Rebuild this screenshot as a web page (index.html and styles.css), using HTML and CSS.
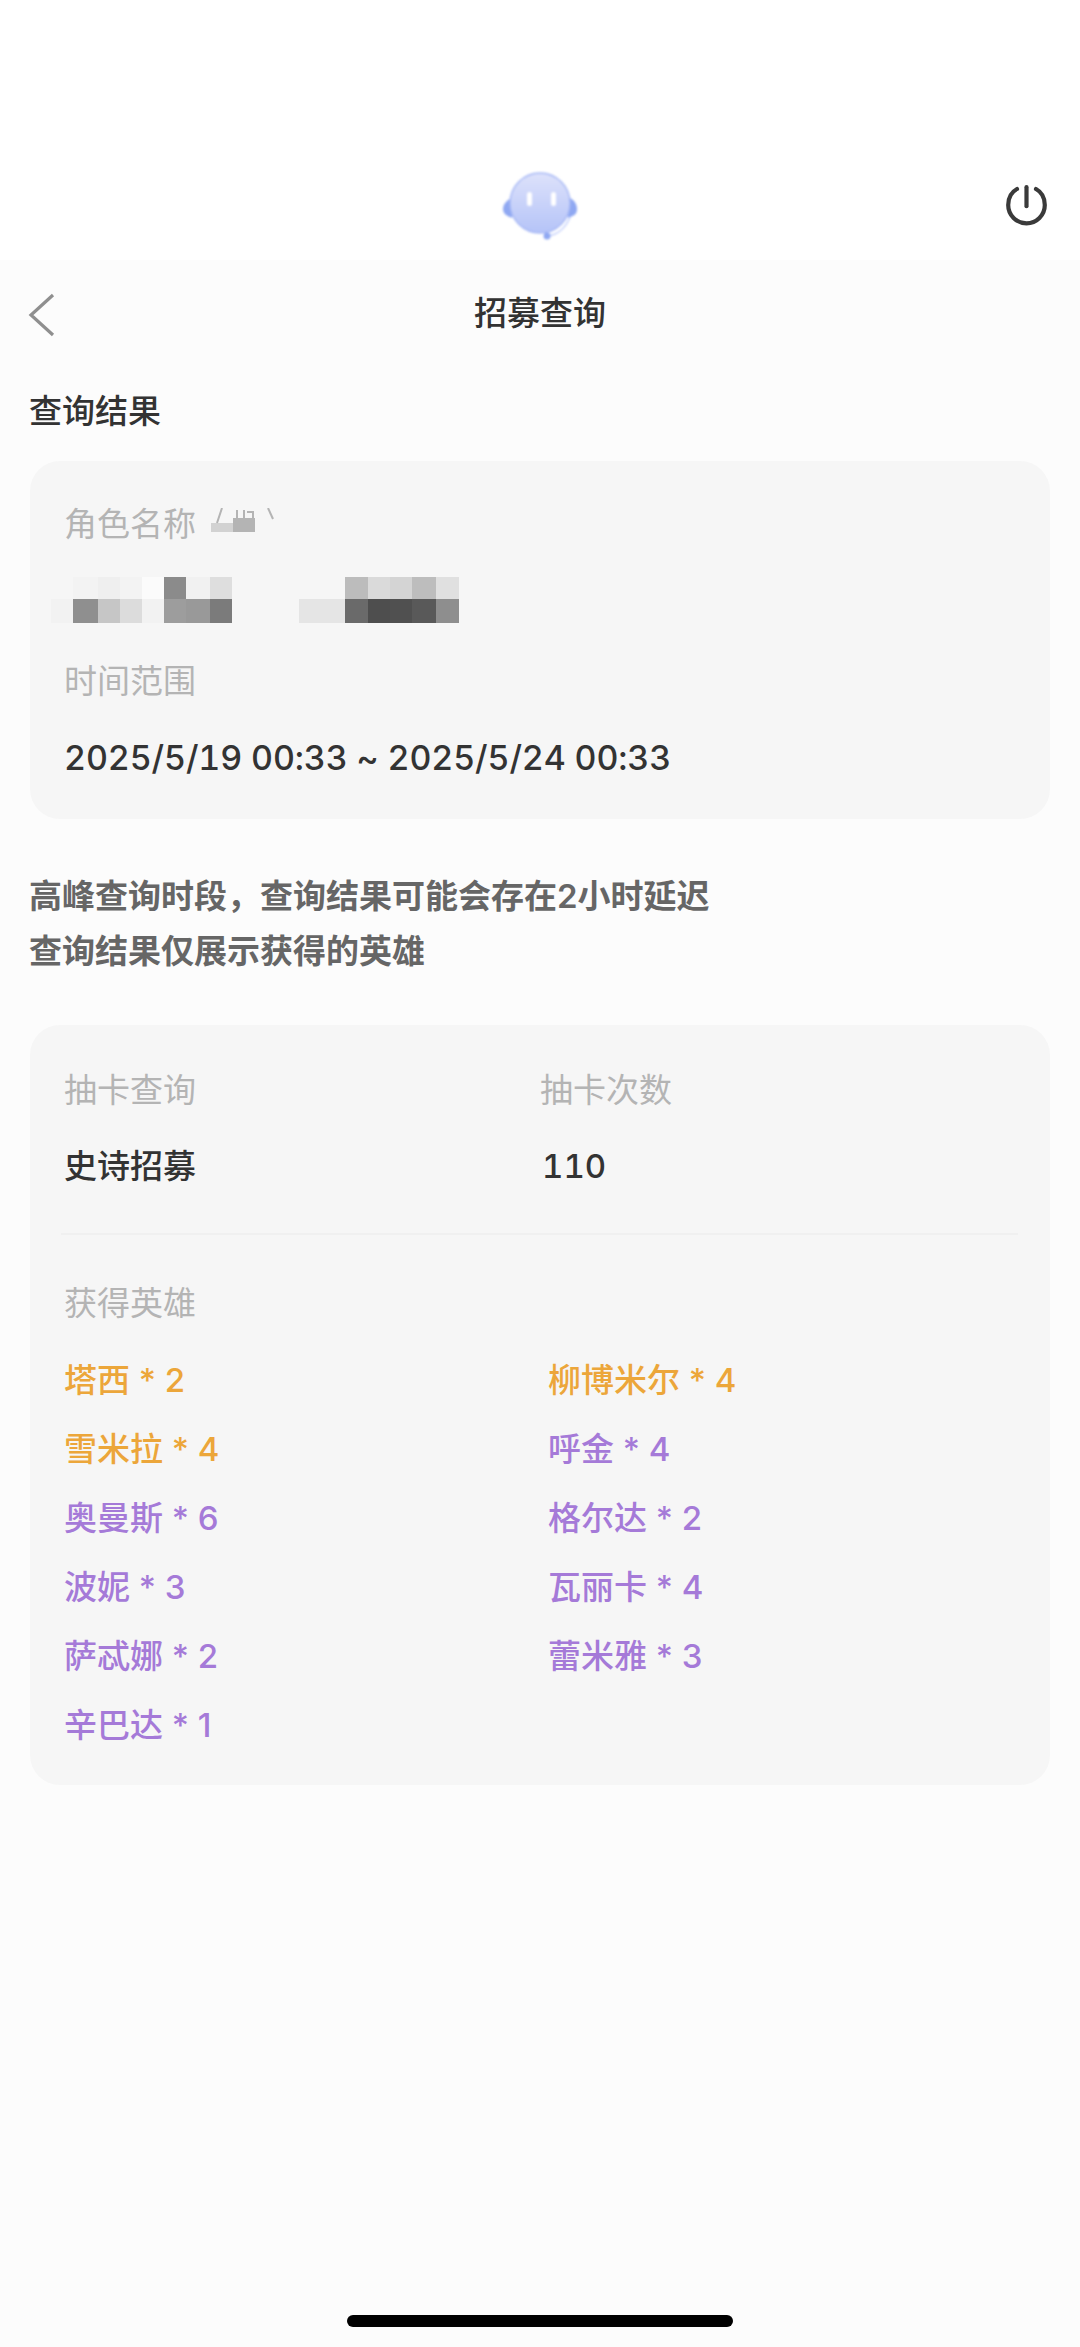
FILE: index.html
```html
<!DOCTYPE html>
<html lang="zh-CN">
<head>
<meta charset="utf-8">
<title>招募查询</title>
<link rel="stylesheet" href="styles.css">
</head>
<body>
<div class="page">
  <header class="topbar">
    <svg class="mascot" viewBox="0 0 80 80" width="80" height="80" aria-hidden="true">
      <defs>
        <linearGradient id="face" x1="0" y1="0" x2="0" y2="1">
          <stop offset="0" stop-color="#dde2fb"/>
          <stop offset="1" stop-color="#b5c4f8"/>
        </linearGradient>
      </defs>
      <path d="M12 33c-5 2-9 6-9 11s4 7 9 9z" fill="#8fa8f2"/>
      <path d="M68 32c5 2 9 6 9 12s-4 7-9 9z" fill="#8fa8f2"/>
      <circle cx="40" cy="38" r="30" fill="url(#face)" stroke="#a8b9f5" stroke-width="1.500"/>
      <rect x="27" y="27" width="5" height="14" rx="2.500" fill="#fff"/>
      <rect x="51" y="27" width="5" height="14" rx="2.500" fill="#fff"/>
      <path d="M70 52c-4 10-12 18-23 19" fill="none" stroke="#c9d4fb" stroke-width="1.800"/>
      <circle cx="47" cy="71" r="3.500" fill="#8fa8f2"/>
    </svg>
    <svg class="power" viewBox="0 0 41 41" width="41" height="41" aria-hidden="true">
      <path d="M11 4C5.500 7 2.200 12.500 2.200 20a18.300 18.300 0 0 0 36.600 0C38.800 12.500 35.500 7 30 4" fill="none" stroke="#3a3a3a" stroke-width="4.200" stroke-linecap="round"/>
      <path d="M20.500 2.200v19" fill="none" stroke="#3a3a3a" stroke-width="4.200" stroke-linecap="round"/>
    </svg>
  </header>

  <nav class="navbar">
    <svg class="back" viewBox="0 0 28 44" width="28" height="44" aria-hidden="true">
      <path d="M26 2L4 22l22 20" fill="none" stroke="#8f8f8f" stroke-width="3.200"/>
    </svg>
    <h1 class="nav-title">招募查询</h1>
  </nav>

  <main class="content">
    <h2 class="section-title">查询结果</h2>

    <section class="card info-card">
      <div class="label-row">
        <span class="label">角色名称</span>
        <svg class="smudge" viewBox="0 0 66 26" width="66" height="26" aria-hidden="true">
          <rect x="0" y="15" width="22" height="9" fill="#d2d2d2"/>
          <rect x="22" y="10" width="22" height="14" fill="#b4b4b4"/>
          <path d="M11 0L6 15M26 2v10M33 2v10M36 4h6v7" fill="none" stroke="#b4b4b4" stroke-width="2"/>
          <path d="M57 0l5 11" fill="none" stroke="#b4b4b4" stroke-width="2"/>
        </svg>
      </div>
      <svg class="mosaic" viewBox="0 0 410 48" width="410" height="48" aria-hidden="true">
        <rect x="0" y="0" width="25" height="22" fill="#f3f3f3"/>
        <rect x="25" y="0" width="22" height="22" fill="#efefef"/>
        <rect x="47" y="0" width="22" height="22" fill="#f3f3f3"/>
        <rect x="69" y="0" width="22" height="22" fill="#fbfbfb"/>
        <rect x="91" y="0" width="22" height="22" fill="#8b8b8b"/>
        <rect x="113" y="0" width="24" height="22" fill="#f1f1f1"/>
        <rect x="137" y="0" width="22" height="22" fill="#dedede"/>
        <rect x="272" y="0" width="23" height="22" fill="#bcbcbc"/>
        <rect x="295" y="0" width="22" height="22" fill="#dadada"/>
        <rect x="317" y="0" width="22" height="22" fill="#d4d4d4"/>
        <rect x="339" y="0" width="24" height="22" fill="#bdbdbd"/>
        <rect x="363" y="0" width="23" height="22" fill="#e0e0e0"/>
        <rect x="-22" y="22" width="22" height="24" fill="#f2f2f2"/>
        <rect x="0" y="22" width="25" height="24" fill="#8f8f8f"/>
        <rect x="25" y="22" width="22" height="24" fill="#c6c6c6"/>
        <rect x="47" y="22" width="22" height="24" fill="#dcdcdc"/>
        <rect x="69" y="22" width="22" height="24" fill="#f2f2f2"/>
        <rect x="91" y="22" width="22" height="24" fill="#9d9d9d"/>
        <rect x="113" y="22" width="24" height="24" fill="#999999"/>
        <rect x="137" y="22" width="22" height="24" fill="#7b7b7b"/>
        <rect x="226" y="22" width="46" height="24" fill="#e5e5e5"/>
        <rect x="272" y="22" width="23" height="24" fill="#6a6a6a"/>
        <rect x="295" y="22" width="22" height="24" fill="#4e4e4e"/>
        <rect x="317" y="22" width="22" height="24" fill="#505050"/>
        <rect x="339" y="22" width="24" height="24" fill="#595959"/>
        <rect x="363" y="22" width="23" height="24" fill="#8e8e8e"/>
      </svg>
      <div class="label range-label">时间范围</div>
      <div class="range-value">2025/5/19 00:33 ~ 2025/5/24 00:33</div>
    </section>

    <div class="notes">
      <p>高峰查询时段，查询结果可能会存在2小时延迟</p>
      <p>查询结果仅展示获得的英雄</p>
    </div>

    <section class="card result-card">
      <div class="summary">
        <div>
          <div class="label">抽卡查询</div>
          <div class="summary-value">史诗招募</div>
        </div>
        <div>
          <div class="label">抽卡次数</div>
          <div class="summary-value count">110</div>
        </div>
      </div>
      <hr class="divider">
      <div class="label">获得英雄</div>
      <ul class="heroes">
        <li class="gold">塔西 * 2</li>
        <li class="gold">柳博米尔 * 4</li>
        <li class="gold">雪米拉 * 4</li>
        <li class="purple">呼金 * 4</li>
        <li class="purple">奥曼斯 * 6</li>
        <li class="purple">格尔达 * 2</li>
        <li class="purple">波妮 * 3</li>
        <li class="purple">瓦丽卡 * 4</li>
        <li class="purple">萨忒娜 * 2</li>
        <li class="purple">蕾米雅 * 3</li>
        <li class="purple">辛巴达 * 1</li>
      </ul>
    </section>
  </main>
  <div class="home-indicator"></div>
</div>
</body>
</html>
```

FILE: styles.css
```css
* { box-sizing: border-box; }
html, body { margin: 0; padding: 0; }
body {
  background: #fcfcfc;
  font-family: Inter, "Noto Sans CJK SC", sans-serif;
  color: #333;
}
.page { position: relative; width: 1080px; height: 2347px; overflow: hidden; }

.topbar {
  height: 260px;
  background: #fff;
  position: relative;
}
.mascot { position: absolute; left: 500px; top: 165px; filter: blur(0.9px); }
.power { position: absolute; left: 1006px; top: 185px; }

.navbar {
  position: relative;
  height: 104px;
  display: flex;
  align-items: center;
  justify-content: center;
}
.back { position: absolute; left: 27px; top: 33px; }
.nav-title {
  margin: 2px 0 0;
  font-size: 33px;
  font-weight: 500;
  line-height: 44px;
  color: #333;
}

.content { padding: 0 30px; }
.section-title {
  margin: 25px 0 0 -1px;
  font-size: 33px;
  font-weight: 500;
  line-height: 44px;
  color: #333;
}

.card {
  background: #f6f6f6;
  border-radius: 30px;
  padding: 0 34px;
}
.info-card { margin-top: 28px; height: 358px; padding-top: 41px; }
.label-row { display: flex; align-items: flex-start; gap: 15px; height: 44px; }
.smudge { margin-top: 6px; }
.label {
  font-size: 33px;
  line-height: 44px;
  color: #b4b4b4;
}
.mosaic { display: block; margin: 31px 0 0 9px; overflow: visible; }
.range-label { margin-top: 34px; }
.range-value {
  margin-top: 33px;
  font-size: 34px;
  font-variant-numeric: tabular-nums;
  letter-spacing: -0.14px;
  font-weight: 500;
  line-height: 44px;
  color: #333;
}

.notes { margin: 50px 0 0 -1px; }
.notes p {
  margin: 0;
  font-size: 33px;
  font-weight: 600;
  line-height: 55px;
  color: #666;
}

.result-card { margin-top: 46px; height: 760px; padding-top: 43px; }
.summary {
  display: grid;
  grid-template-columns: 476px 1fr;
}
.summary-value {
  margin-top: 32px;
  font-size: 33px;
  font-weight: 500;
  font-variant-numeric: tabular-nums;
  line-height: 44px;
  color: #333;
}
.count { margin-left: 2px; }
.divider {
  margin: 45px 0 46px -3px;
  width: 957px;
  height: 2px;
  border: 0;
  background: #f0f0f0;
}
.heroes {
  list-style: none;
  margin: 33px 0 0;
  padding: 0;
  display: grid;
  grid-template-columns: 484px 1fr;
  grid-auto-rows: 69px;
}
.heroes li {
  font-size: 33px;
  font-weight: 500;
  line-height: 44px;
}
.gold { color: #eca63a; }
.purple { color: #a57ad8; }

.home-indicator {
  position: absolute;
  left: 347px;
  top: 2315px;
  width: 386px;
  height: 12px;
  border-radius: 6px;
  background: #000;
}
```
